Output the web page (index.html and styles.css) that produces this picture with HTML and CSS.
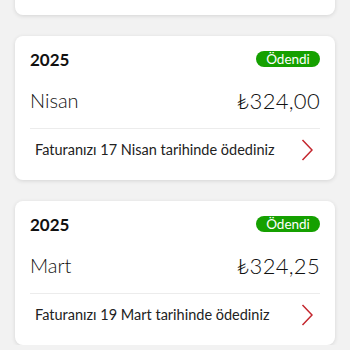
FILE: index.html
```html
<!DOCTYPE html>
<html lang="tr">
<head>
<meta charset="utf-8">
<link rel="stylesheet" href="styles.css">
</head>
<body>
<div class="list">
  <div class="card card-partial"></div>
  <div class="card">
    <div class="row-top"><span class="year">2025</span><span class="badge">Ödendi</span></div>
    <div class="row-main"><span class="month">Nisan</span><span class="amount">₺324,00</span></div>
    <div class="divider"></div>
    <div class="row-foot"><span class="note">Faturanızı 17 Nisan tarihinde ödediniz</span>
      <svg class="chev" viewBox="0 0 12 22" width="12" height="22"><path d="M1.5 1 L11 11 L1.5 21" fill="none" stroke="#c4262e" stroke-width="1.5"/></svg></div>
  </div>
  <div class="card">
    <div class="row-top"><span class="year">2025</span><span class="badge">Ödendi</span></div>
    <div class="row-main"><span class="month">Mart</span><span class="amount">₺324,25</span></div>
    <div class="divider"></div>
    <div class="row-foot"><span class="note">Faturanızı 19 Mart tarihinde ödediniz</span>
      <svg class="chev" viewBox="0 0 12 22" width="12" height="22"><path d="M1.5 1 L11 11 L1.5 21" fill="none" stroke="#c4262e" stroke-width="1.5"/></svg></div>
  </div>
</div>
</body>
</html>
```
FILE: styles.css
```css
html, body {
  margin: 0;
  padding: 0;
  background: #f2f2f2;
  font-family: "Lato", "Open Sans", sans-serif;
  color: #222;
  overflow: hidden;
}
.list {
  display: flex;
  flex-direction: column;
  gap: 21px;
  padding: 0 15px;
  margin-top: -129px;
}
.card {
  background: #fff;
  border-radius: 8px;
  box-shadow: 0 1px 4px rgba(0,0,0,0.12);
  height: 144px;
  box-sizing: border-box;
  padding: 15px 15px 0 15px;
  display: flex;
  flex-direction: column;
}
.row-top {
  display: flex;
  justify-content: space-between;
  align-items: center;
  height: 16px;
}
.year {
  font-weight: 700;
  font-size: 17px;
  color: #111;
}
.badge {
  background: #15a000;
  color: #fff;
  font-size: 13.5px;
  height: 16px;
  line-height: 16px;
  width: 64px;
  text-align: center;
  border-radius: 8px;
}
.row-main {
  display: flex;
  justify-content: space-between;
  align-items: center;
  height: 30px;
  margin-top: 18px;
}
.month {
  font-size: 20px;
  font-weight: 300;
  color: #111;
}
.amount {
  font-size: 22px;
  font-weight: 300;
  letter-spacing: 0.3px;
  color: #111;
}
.divider {
  height: 1px;
  background: #ececec;
  margin-top: 13px;
}
.row-foot {
  display: flex;
  justify-content: space-between;
  align-items: center;
  height: 41px;
  padding: 0 7px 0 5px;
}
.note {
  font-size: 14.5px;
  color: #222;
}
.chev {
  display: block;
}
```
